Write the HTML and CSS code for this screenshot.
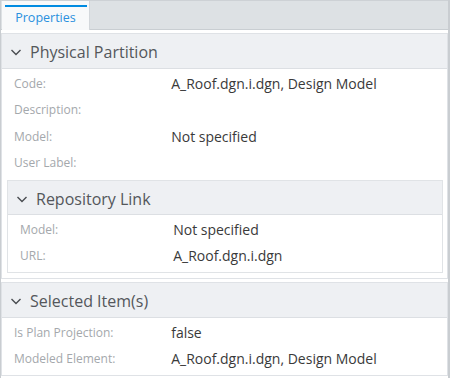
FILE: index.html
```html
<!DOCTYPE html>
<html>
<head>
<meta charset="utf-8">
<link rel="stylesheet" href="styles.css">
</head>
<body>
<div class="panel">
  <div class="tabbar">
    <div class="tab"><span class="tab-label">Properties</span></div>
  </div>

  <div class="section">
    <div class="header">
      <svg class="chev" viewBox="0 0 12 12"><path d="M1.5 4 L6 8.5 L10.5 4"/></svg>
      <span>Physical Partition</span>
    </div>
    <div class="body">
      <div class="row"><span class="label">Code:</span><span class="value">A_Roof.dgn.i.dgn, Design Model</span></div>
      <div class="row"><span class="label">Description:</span><span class="value"></span></div>
      <div class="row"><span class="label">Model:</span><span class="value">Not specified</span></div>
      <div class="row"><span class="label">User Label:</span><span class="value"></span></div>

      <div class="section nested">
        <div class="header nested-header">
          <svg class="chev" viewBox="0 0 12 12"><path d="M1.5 4 L6 8.5 L10.5 4"/></svg>
          <span>Repository Link</span>
        </div>
        <div class="body">
          <div class="row"><span class="label">Model:</span><span class="value">Not specified</span></div>
          <div class="row"><span class="label">URL:</span><span class="value">A_Roof.dgn.i.dgn</span></div>
        </div>
      </div>
    </div>
  </div>

  <div class="section">
    <div class="header">
      <svg class="chev" viewBox="0 0 12 12"><path d="M1.5 4 L6 8.5 L10.5 4"/></svg>
      <span>Selected Item(s)</span>
    </div>
    <div class="body">
      <div class="row"><span class="label">Is Plan Projection:</span><span class="value">false</span></div>
      <div class="row"><span class="label">Modeled Element:</span><span class="value">A_Roof.dgn.i.dgn, Design Model</span></div>
    </div>
  </div>
</div>
</body>
</html>
```

FILE: styles.css
```css
* { box-sizing: border-box; }

html, body {
  margin: 0;
  padding: 0;
  background: #ffffff;
}

body {
  font-family: "Open Sans", "DejaVu Sans", sans-serif;
  width: 450px;
  height: 378px;
  overflow: hidden;
}

.panel {
  width: 450px;
  height: 378px;
  border-left: 1px solid #c9cdd1;
  border-right: 2px solid #c9cdd1;
  background: #ffffff;
  overflow: hidden;
}

.tabbar {
  display: flex;
  height: 30px;
  background: #dde1e4;
  border-top: 1px solid #cdd1d5;
  border-bottom: 1px solid #c9ced2;
}

.tab {
  width: 88px;
  margin-left: 1px;
  margin-bottom: -1px;
  background: #f8f9fa;
  border-right: 1px solid #d3d7db;
  padding-top: 4px;
  display: flex;
  flex-direction: column;
  align-items: center;
}

.tab::before {
  content: "";
  display: block;
  height: 2px;
  width: 82px;
  background: #008be1;
}

.tab-label {
  margin-top: 2px;
  font-size: 12.5px;
  line-height: 17px;
  color: #2a90de;
}

.section {
  margin-top: 3px;
  border: 1px solid #dfe2e6;
}

.header {
  display: flex;
  align-items: center;
  gap: 8px;
  height: 35px;
  padding-left: 8px;
  padding-top: 2px;
  background: #eef0f3;
  border-bottom: 1px solid #dcdfe3;
  font-size: 16px;
  color: #54575b;
}

.nested-header {
  height: 34px;
}

.chev {
  width: 12px;
  height: 12px;
  flex: none;
}

.chev path {
  fill: none;
  stroke: #4a4d51;
  stroke-width: 1.4;
}

.body {
  padding-bottom: 4px;
}

.section > .body > .nested + * { margin-top: 0; }

.row {
  display: grid;
  grid-template-columns: 36.3% 1fr;
  align-items: center;
  height: 26.5px;
  padding-left: 12px;
  padding-top: 2px;
}

.label {
  font-size: 12px;
  color: #a4a8ac;
  white-space: nowrap;
}

.value {
  font-size: 14px;
  color: #3a3a3a;
  white-space: nowrap;
}

.nested {
  margin: 5px 4px 1px 5px;
  border-color: #e0e3e6;
}
```
